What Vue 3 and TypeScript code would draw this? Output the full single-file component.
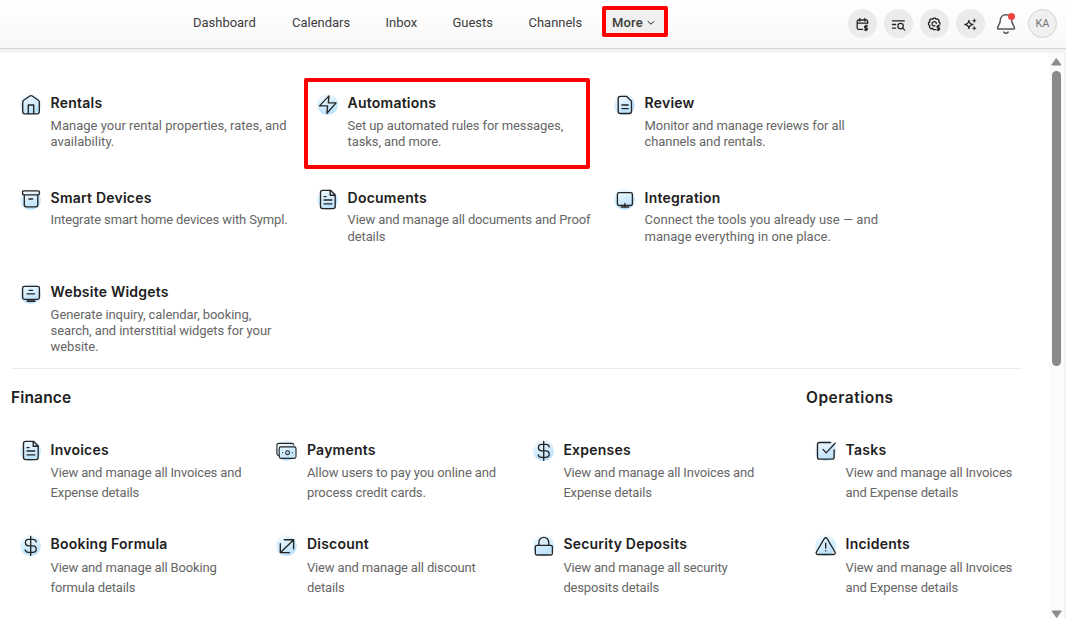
<script setup lang="ts">
interface Item { icon: string; title: string; lines: string[] }

const nav: string[] = ['Dashboard', 'Calendars', 'Inbox', 'Guests', 'Channels']

const main: Item[] = [
  { icon: 'home', title: 'Rentals', lines: ['Manage your rental properties, rates, and', 'availability.'] },
  { icon: 'bolt', title: 'Automations', lines: ['Set up automated rules for messages,', 'tasks, and more.'] },
  { icon: 'review', title: 'Review', lines: ['Monitor and manage reviews for all', 'channels and rentals.'] },
  { icon: 'archive', title: 'Smart Devices', lines: ['Integrate smart home devices with Sympl.'] },
  { icon: 'doc', title: 'Documents', lines: ['View and manage all documents and Proof', 'details'] },
  { icon: 'monitor', title: 'Integration', lines: ['Connect the tools you already use — and', 'manage everything in one place.'] },
  { icon: 'widget', title: 'Website Widgets', lines: ['Generate inquiry, calendar, booking,', 'search, and interstitial widgets for your', 'website.'] },
]

const finance: Item[] = [
  { icon: 'doc', title: 'Invoices', lines: ['View and manage all Invoices and', 'Expense details'] },
  { icon: 'cash', title: 'Payments', lines: ['Allow users to pay you online and', 'process credit cards.'] },
  { icon: 'dollar', title: 'Expenses', lines: ['View and manage all Invoices and', 'Expense details'] },
  { icon: 'dollar', title: 'Booking Formula', lines: ['View and manage all Booking', 'formula details'] },
  { icon: 'arrows', title: 'Discount', lines: ['View and manage all discount', 'details'] },
  { icon: 'lock', title: 'Security Deposits', lines: ['View and manage all security', 'desposits details'] },
]

const operations: Item[] = [
  { icon: 'check', title: 'Tasks', lines: ['View and manage all Invoices', 'and Expense details'] },
  { icon: 'alert', title: 'Incidents', lines: ['View and manage all Invoices', 'and Expense details'] },
]

const groups = [
  { name: 'main', heading: '', items: main },
  { name: 'finance', heading: 'Finance', items: finance },
  { name: 'operations', heading: 'Operations', items: operations },
]

const icons: Record<string, string> = {
  home: 'M2.7 8.3Q2.7 7 3.7 6.2L9.8 2Q11 1.2 12.2 2L18.3 6.2Q19.3 7 19.3 8.3V17.6Q19.3 19.8 17.2 19.8H4.8Q2.7 19.8 2.7 17.6ZM8.3 19.8V11H13.7V19.8',
  bolt: 'M12 1.9L2.5 11.9H10.6L9.9 19.3L19.1 8.9H11.3Z',
  review: 'M6.2 2.3H12.4L17.5 7.3V17.3Q17.5 19.5 15.3 19.5H6.2Q4.2 19.5 4.2 17.3V4.5Q4.2 2.3 6.2 2.3ZM7.9 11H14.2M7.9 14.6H14.2',
  archive: 'M3.7 1.8H18.3Q19.4 1.8 19.4 2.9V4.8Q19.4 5.9 18.3 5.9H3.7Q2.6 5.9 2.6 4.8V2.9Q2.6 1.8 3.7 1.8ZM4.3 6V15.8Q4.3 17.8 6.3 17.8H15.8Q17.8 17.8 17.8 15.8V6M8.9 10H12.6',
  doc: 'M5.6 1.3H13.4L18.2 6.1V17.5Q18.2 19.6 16.1 19.6H5.6Q3.5 19.6 3.5 17.5V3.4Q3.5 1.3 5.6 1.3ZM13.2 1.6V6.2H18M7 7.6H9.1M7 11H14.8M7 14.8H14.8',
  monitor: 'M5.2 3.6H16.6Q18.4 3.6 18.4 5.4V14.7Q18.4 16.5 16.6 16.5H5.2Q3.4 16.5 3.4 14.7V5.4Q3.4 3.6 5.2 3.6ZM10.9 14.3V18M7.3 18.1H14.6',
  widget: 'M4.4 3.3H17.6Q19.4 3.3 19.4 5.1V14.6Q19.4 16.4 17.6 16.4H4.4Q2.6 16.4 2.6 14.6V5.1Q2.6 3.3 4.4 3.3ZM9 7.3H12.6M7 10.8H14.6M7.2 17.8H14.8M7.2 18.4H14.8',
  dollar: 'M10.7 1.3V20.3M16.2 6.9Q15.8 4.4 13 4.4H8.7Q5.4 4.4 5.4 7.6Q5.4 10.8 8.7 10.8H12.9Q16.2 10.8 16.2 14.1Q16.2 17.4 12.9 17.4H8.5Q5.7 17.4 5.2 14.9',
  cash: 'M2.8 15.5Q.9 15.3 .9 13.6V5.2Q.9 3.4 2.7 3.4H15.8Q17.5 3.4 17.7 5M5 6.9H18.2Q20 6.9 20 8.7V16.6Q20 18.4 18.2 18.4H5Q3.2 18.4 3.2 16.6V8.7Q3.2 6.9 5 6.9ZM11.6 10.8A1.9 1.9 0 1 1 11.6 14.6A1.9 1.9 0 1 1 11.6 10.8M6.5 12.7H6.7M16.3 12.7H16.5',
  arrows: 'M8.3 4.7H17.6V13.8M4.3 8.6V17.6H13.4M4.5 17.4L17.4 4.9',
  lock: 'M4 10.3H17.7Q19.4 10.3 19.4 12V18.3Q19.4 20 17.7 20H4Q2.3 20 2.3 18.3V12Q2.3 10.3 4 10.3ZM5.9 10.1V7.3A4.9 4.9 0 0 1 15.7 7.3V10.1',
  check: 'M15.6 2.5H4.4Q2.5 2.5 2.5 4.4V17.2Q2.5 19.1 4.4 19.1H17.2Q19.1 19.1 19.1 17.2V9.8M8 9.4L11.2 12.9L20.1 3.2',
  alert: 'M9.3 3.6Q10.7 1.9 12.1 3.6L20 17Q20.7 19.3 18.7 19.5H2.7Q.7 19.3 1.4 17ZM10.7 8.1V13M10.7 15.6V15.9',
}
</script>

<template>
  <div class="page">
    <header class="topbar">
      <nav class="nav">
        <a v-for="(n, i) in nav" :key="n" :class="['link', 'link-' + i]">{{ n }}</a>
        <a class="more"><span>More</span>
          <svg width="8" height="6" viewBox="0 0 8 6"><path d="M1 1.5L4 4.2L7 1.5" /></svg>
        </a>
      </nav>
      <div class="tools">
        <span class="tool"><svg viewBox="0 0 16 16"><path d="M8 13.2H4Q2.3 13.2 2.3 11.5V4.9Q2.3 3.2 4 3.2H11.8Q13.5 3.2 13.5 4.9V7M2.3 6.5H13.5M5.2 1.6V4.4M10.6 1.6V4.4" /><path d="M13.2 9.6H11.3Q10.2 9.6 10.2 10.6T11.3 11.7H12Q13.2 11.7 13.2 12.8T12 13.8H10M11.7 8.8V14.6" /></svg></span>
        <span class="tool"><svg viewBox="0 0 16 16"><path d="M1.5 4.2H14.2M1.5 8H5M1.5 11.8H5" /><circle cx="10.2" cy="9.7" r="2.9" /><path d="M12.4 11.9L14.6 14" /></svg></span>
        <span class="tool"><svg viewBox="0 0 16 16"><path d="M9 13.5H6.6L6.1 11.8L4.2 12.6L2.5 10.8L3.2 9.1L1.6 8.2V6L3.2 5.2L2.6 3.5L4.3 1.9L6 2.6L6.9 1.2H8.8L9.7 2.6L11.4 2L13 3.6L12.4 5.3L13.8 6.2V7.7" /><path d="M8.5 9.4A2.3 2.3 0 1 1 10 7.1M13.5 9.4H11.7Q10.7 9.4 10.7 10.4T11.7 11.5H12.4Q13.5 11.5 13.5 12.5T12.4 13.6H10.6M12.1 8.7V14.4" /></svg></span>
        <span class="tool"><svg viewBox="0 0 16 16"><path d="M6.3 3.7Q6.8 7.5 10.6 8Q6.8 8.5 6.3 12.3Q5.8 8.5 2 8Q5.8 7.5 6.3 3.7Z" /><path class="solid" d="M12 1.9L12.6 3.4L14.1 4L12.6 4.6L12 6.1L11.4 4.6L9.9 4L11.4 3.4ZM12 9.9L12.6 11.4L14.1 12L12.6 12.6L12 14.1L11.4 12.6L9.9 12L11.4 11.4Z" /></svg></span>
        <span class="bell"><svg width="20" height="22" viewBox="0 0 20 22"><path d="M10 1.7C6.3 1.7 4.3 4.4 4.3 7.3C4.3 11.4 1.5 12.8 1.5 15.2Q1.5 16.1 2.5 16.1H17.5Q18.5 16.1 18.5 15.2C18.5 12.8 15.7 11.4 15.7 7.3C15.7 4.4 13.7 1.7 10 1.7ZM7.8 19Q8.6 20.2 10 20.2T12.2 19" /></svg><i class="dot"></i></span>
        <span class="avatar">KA</span>
      </div>
    </header>

    <div class="body">
      <main class="content">
        <section v-for="g in groups" :key="g.name" :class="['group', g.name]">
          <h2 v-if="g.heading">{{ g.heading }}</h2>
          <div class="grid">
            <article v-for="it in g.items" :key="it.title" class="item">
              <span class="badge"><svg :class="it.icon" width="21" height="21" viewBox="0 0 21 21"><path :d="icons[it.icon]" /></svg></span>
              <div class="copy">
                <h3>{{ it.title }}</h3>
                <p :class="'text-' + it.icon"><span v-for="l in it.lines" :key="l">{{ l }}</span></p>
              </div>
            </article>
          </div>
        </section>
      </main>
      <div class="scroll">
        <svg width="11" height="8" viewBox="0 0 11 8"><path d="M5.5 .8L10 7H1Z" /></svg>
        <div class="thumb"></div>
        <svg class="down" width="11" height="8" viewBox="0 0 11 8"><path d="M5.5 7.2L1 1H10Z" /></svg>
      </div>
    </div>

    <div class="mark mark-more"></div>
    <div class="mark mark-auto"></div>
  </div>
</template>

<style>
body { margin: 0; overflow: hidden; }
</style>

<style scoped>
.page { position: relative; width: 1066px; height: 618px; overflow: hidden; background: #fff; color: #202020; font-family: Roboto, "Liberation Sans", sans-serif; display: flex; flex-direction: column; }
.topbar { box-sizing: border-box; height: 49px; flex: none; display: flex; justify-content: space-between; border-bottom: 1px solid #d3d5d3; background: linear-gradient(#fff, #f8f8f8); }
.nav { display: grid; grid-template-columns: 99px 93.5px 67px 76px 74px 64px; margin-left: 193px; height: 44px; align-items: center; font-size: 13px; color: #3c3c3c; }
.link { letter-spacing: -.02px; white-space: nowrap; }
.more { box-sizing: border-box; display: flex; align-items: center; gap: 4.5px; height: 27px; padding-left: 9.5px; background: #f0f0f0; font-weight: 500; letter-spacing: .15px; }
.more svg { margin-top: 2px; }
svg { fill: none; stroke: #242424; stroke-linecap: round; stroke-linejoin: round; display: block; }
.tools { display: flex; align-items: flex-start; padding: 9px 9px 0 0; gap: 7px; }
.tool { width: 29px; height: 29px; border-radius: 50%; background: #ebebeb; display: flex; align-items: center; justify-content: center; }
.tool svg { width: 15px; height: 15px; stroke-width: 1.35; margin-top: 1px; }
.tool .solid { fill: #242424; stroke-width: .3; }
.bell { position: relative; width: 29px; height: 29px; display: flex; align-items: center; justify-content: center; }
.bell svg { stroke: #565656; stroke-width: 1.5; margin-right: 1px; }
.dot { position: absolute; left: 16px; top: 4px; width: 7px; height: 7px; border-radius: 50%; background: #f04441; }
.avatar { box-sizing: border-box; width: 29px; height: 29px; border: 1px solid #d2d2d2; border-radius: 50%; background: #f0f0f0; color: #777; font-size: 11px; display: flex; align-items: center; justify-content: center; }
.body { flex: 1; display: flex; border-top: 4px solid #f3f3f3; border-right: 2px solid #f3f3f3; box-sizing: border-box; min-height: 0; }
.content { flex: 1; display: grid; grid-template-columns: 795px 216px; grid-template-rows: 316px auto; padding-left: 11px; align-items: start; }
.main { grid-column: 1 / 3; box-sizing: border-box; height: 316px; border-bottom: 1px solid #ececec; padding: 41px 0 0 9px; }
.main .grid { display: grid; grid-template-columns: repeat(3, 297px); grid-auto-rows: 94.5px; }
.finance, .operations { padding-top: 17px; }
.finance .grid { display: grid; grid-template-columns: repeat(3, 256.4px); grid-auto-rows: 94.5px; padding-left: 9px; }
.operations .grid { display: grid; grid-auto-rows: 94.5px; padding-left: 9px; }
h2 { margin: 0 0 31px; font-family: Inter, Roboto, sans-serif; font-size: 15.5px; line-height: 23px; font-weight: 600; letter-spacing: .15px; }
.operations h2 { letter-spacing: .5px; }
.item { display: flex; gap: 9.6px; white-space: nowrap; }
.badge { width: 21px; height: 21px; border-radius: 50%; background: linear-gradient(160deg, #edf8ff 15%, #aedcfb 100%); flex: none; }
.badge svg { stroke-width: 1.35; }
.badge .cash { stroke-width: 1.1; }
h3 { margin: 0; font-family: Inter, Roboto, sans-serif; font-size: 14px; line-height: 18px; font-weight: 600; letter-spacing: .22px; }
p { margin: 5.7px 0 0; color: #666; font-size: 13px; line-height: 16.25px; letter-spacing: -.13px; }
.text-home, .text-monitor { letter-spacing: .01px; }
.text-widget { letter-spacing: -.07px; }
.text-cash, .text-review { letter-spacing: -.1px; }
.text-bolt { letter-spacing: -.1px; }
p span { display: block; }
.main .copy { padding-top: .1px; }
.finance .copy, .operations .copy { padding-top: .7px; }
.finance p, .operations p { line-height: 20px; margin-top: 4.4px; letter-spacing: -.15px; }
.finance .text-cash { letter-spacing: -.1px; }
.scroll { width: 15px; background: #fbfbfb; display: flex; flex-direction: column; align-items: center; padding-top: 5px; box-sizing: border-box; }
.scroll svg { fill: #8a8a8a; stroke: #8a8a8a; stroke-width: 1; flex: none; }
.thumb { width: 9px; height: 295px; margin-top: 5px; border-radius: 5px; background: #8a8a8a; flex: none; }
.down { margin-top: auto; }
.mark { position: absolute; box-sizing: border-box; border: 4px solid #f00; border-radius: 2px; }
.mark-more { left: 602px; top: 6px; width: 66px; height: 31px; }
.mark-auto { left: 304px; top: 78px; width: 286px; height: 91px; }
</style>
